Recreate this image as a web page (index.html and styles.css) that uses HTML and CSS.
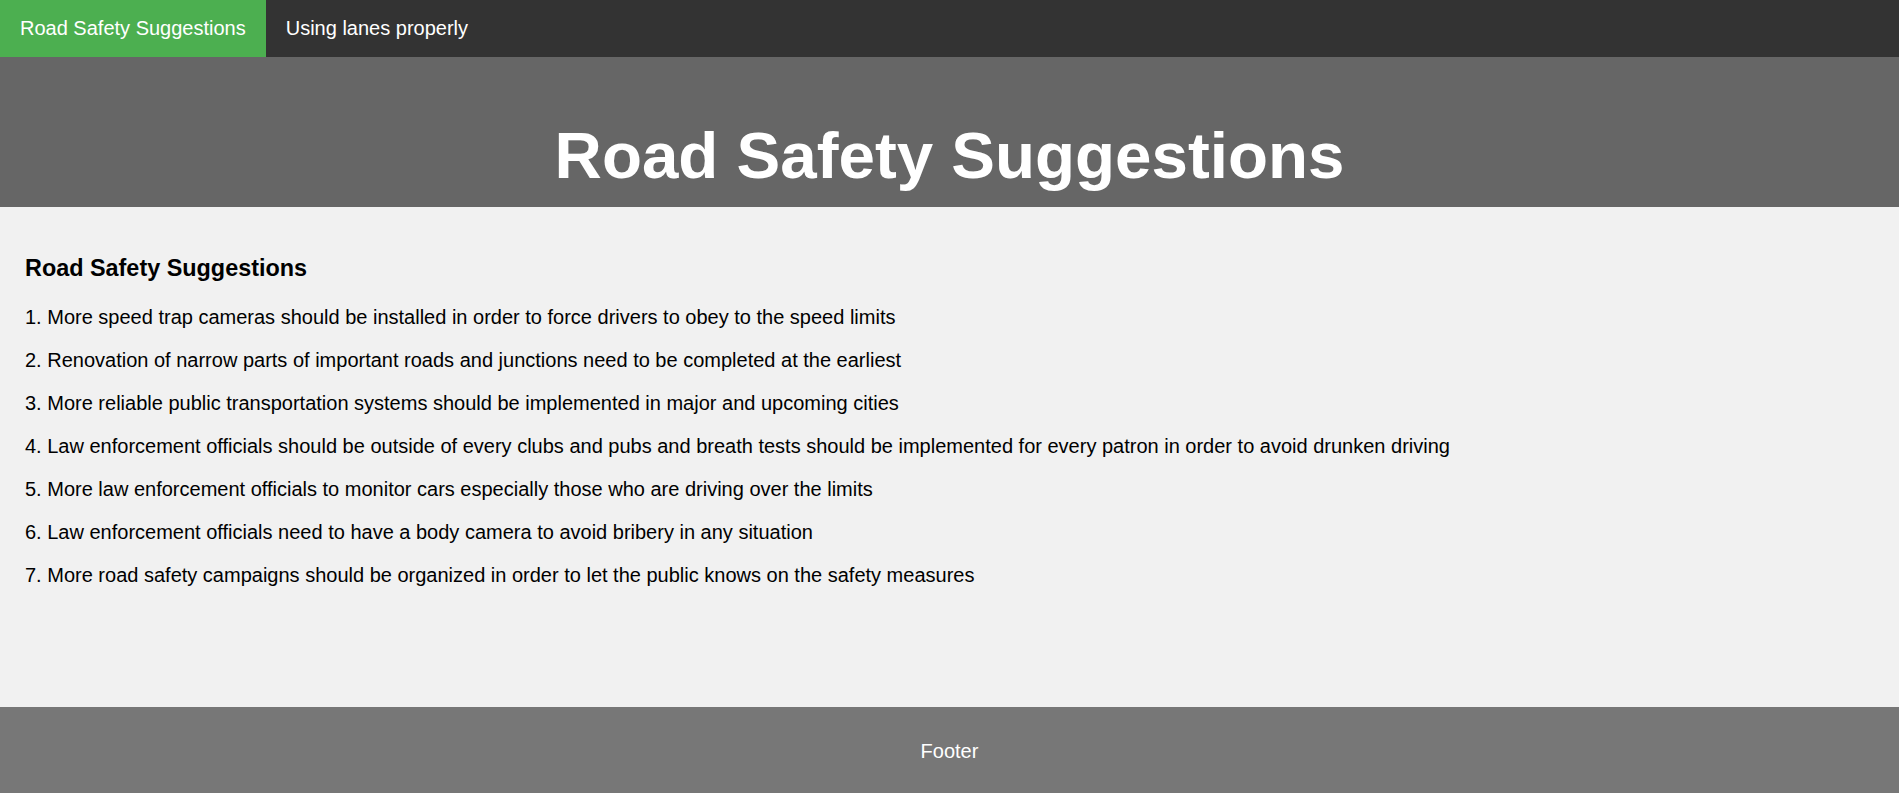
FILE: index.html
```html
<!DOCTYPE html>
<html lang="en">
<head>
<meta charset="utf-8">
<title>Road Safety Suggestions</title>
<link rel="stylesheet" href="styles.css">
</head>
<body>
<nav class="topnav">
  <a class="nav-link active" href="#">Road Safety Suggestions</a>
  <a class="nav-link" href="#">Using lanes properly</a>
</nav>
<header class="header">
  <h1 class="title">Road Safety Suggestions</h1>
</header>
<main class="content">
  <h3 class="section-title">Road Safety Suggestions</h3>
  <p class="item">1. More speed trap cameras should be installed in order to force drivers to obey to the speed limits</p>
  <p class="item">2. Renovation of narrow parts of important roads and junctions need to be completed at the earliest</p>
  <p class="item">3. More reliable public transportation systems should be implemented in major and upcoming cities</p>
  <p class="item">4. Law enforcement officials should be outside of every clubs and pubs and breath tests should be implemented for every patron in order to avoid drunken driving</p>
  <p class="item">5. More law enforcement officials to monitor cars especially those who are driving over the limits</p>
  <p class="item">6. Law enforcement officials need to have a body camera to avoid bribery in any situation</p>
  <p class="item">7. More road safety campaigns should be organized in order to let the public knows on the safety measures</p>
</main>
<footer class="footer">Footer</footer>
</body>
</html>
```
FILE: styles.css
```css
* { box-sizing: border-box; }
html, body { margin: 0; padding: 0; }
body {
  font-family: "Liberation Sans", Arial, sans-serif;
  font-size: 20px;
  color: #000;
  background: #f1f1f1;
}
.topnav {
  display: flex;
  background: #333;
  height: 57px;
}
.nav-link {
  display: block;
  color: #fff;
  text-decoration: none;
  padding: 17px 20px;
  font-size: 20px;
  line-height: 23px;
}
.nav-link.active { background: #4caf50; }
.header {
  background: #666;
  height: 150px;
  padding-top: 61px;
  text-align: center;
}
.title {
  margin: 0;
  color: #fff;
  font-size: 65.5px;
  font-weight: bold;
  line-height: 75px;
}
.content {
  height: 500px;
  padding: 25px 25px;
  background: #f1f1f1;
}
.section-title {
  margin: 23.4px 0;
  font-size: 23.4px;
  font-weight: bold;
  line-height: 27px;
}
.item {
  margin: 20px 0;
  font-size: 20px;
  line-height: 23px;
}
.footer {
  background: #777;
  color: #fff;
  text-align: center;
  padding: 33px 0 31px;
  font-size: 20px;
  line-height: 23px;
}
```
